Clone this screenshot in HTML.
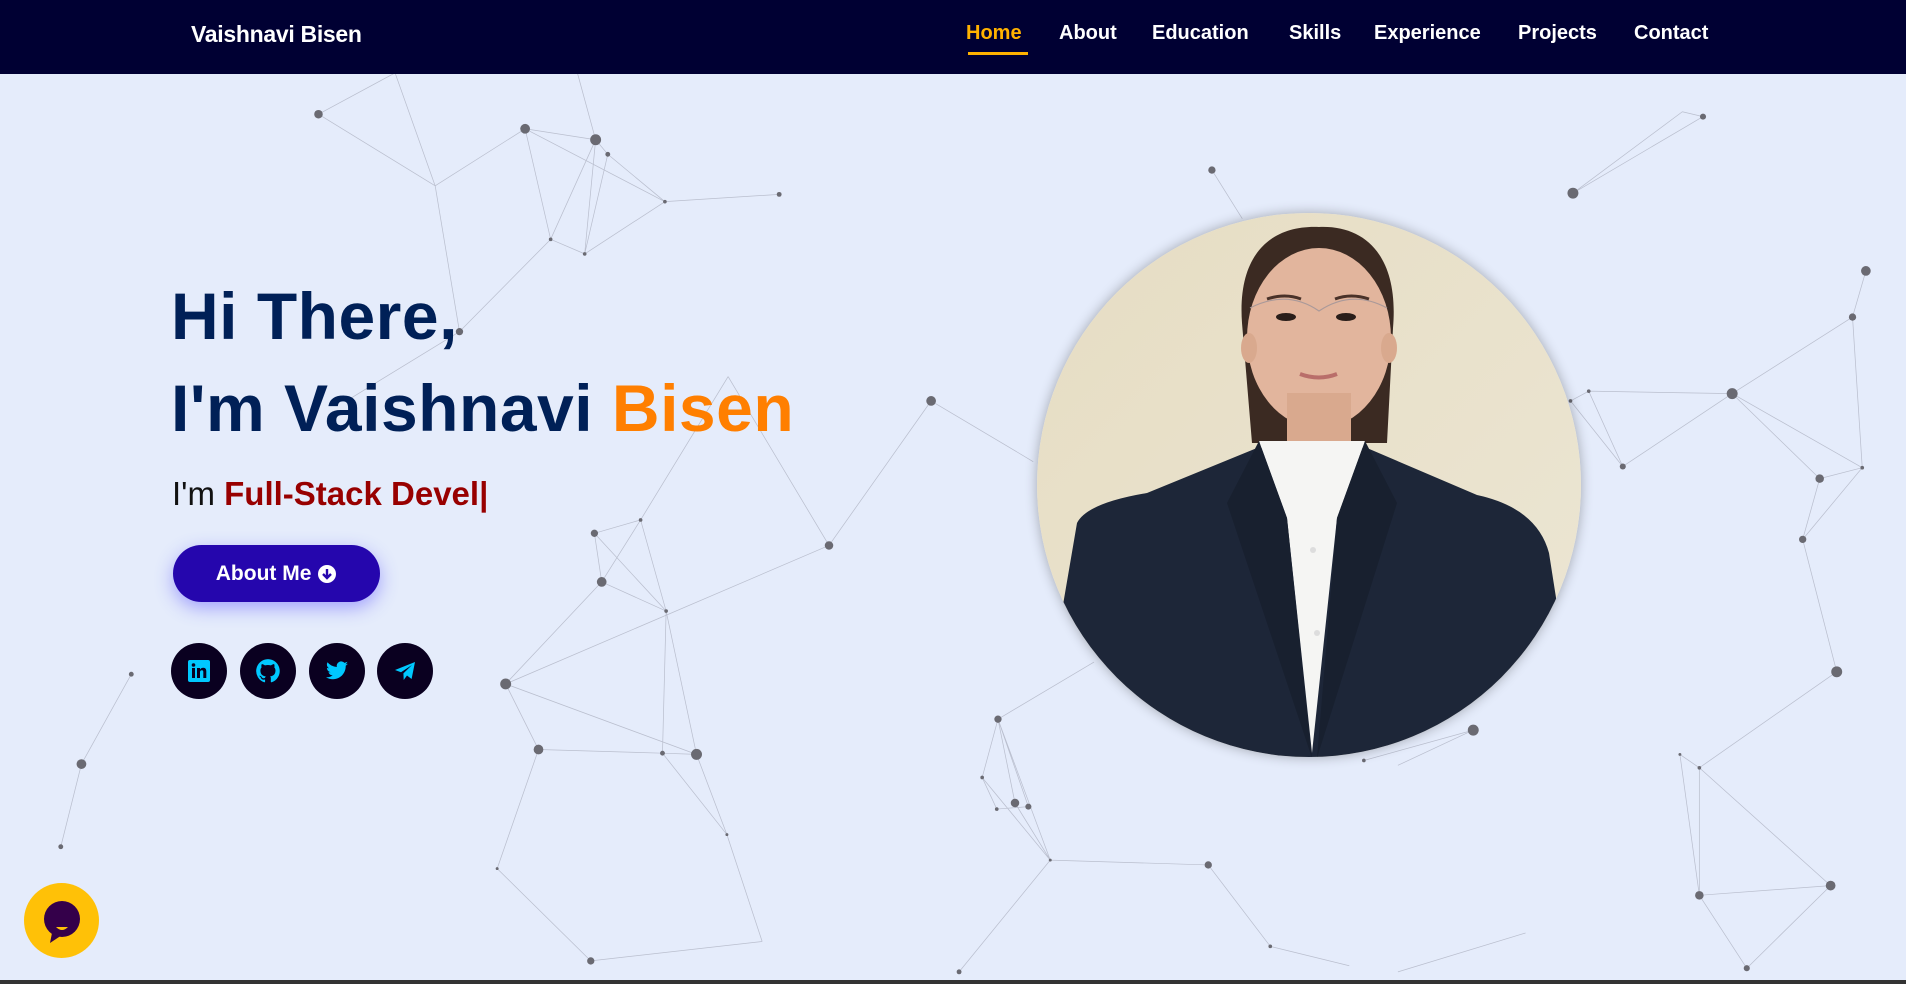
<!DOCTYPE html>
<html><head><meta charset="utf-8"><style>
*{margin:0;padding:0;box-sizing:border-box}
body{width:1906px;height:984px;overflow:hidden;background:#e5ecfb;font-family:"Liberation Sans",sans-serif;position:relative}
nav{position:absolute;left:0;top:0;width:1906px;height:74px;background:#000033;z-index:3}
.logo{position:absolute;left:191px;top:21px;color:#fff;font-weight:700;font-size:23px;letter-spacing:-0.3px}
.nav a{position:absolute;top:22px;color:#fff;font-weight:700;font-size:20px;text-decoration:none}
.nav a.on{color:#ffb200}
.ul{position:absolute;left:968px;top:52px;width:60px;height:3px;background:#ffb200}
svg.bg{position:absolute;left:0;top:0;z-index:0}
.h{position:absolute;left:171px;color:#002057;font-weight:700;font-size:66px;z-index:2;white-space:nowrap;letter-spacing:0.5px}
.sub{position:absolute;left:172px;top:475px;font-size:33px;color:#111;z-index:2}
.sub span{color:#980000;font-weight:700}
.btn{position:absolute;left:173px;top:545px;width:207px;height:57px;border-radius:29px;background:#2506ad;box-shadow:0 6px 18px rgba(80,70,255,.45);color:#fff;font-weight:700;font-size:21px;display:flex;align-items:center;justify-content:center;z-index:2}
.so{position:absolute;top:643px;width:56px;height:56px;border-radius:50%;background:#0a0020;z-index:2;display:flex;align-items:center;justify-content:center}
.photo{position:absolute;left:1037px;top:213px;width:544px;height:544px;border-radius:50%;overflow:hidden;box-shadow:0 0 12px rgba(0,0,0,.3);z-index:2}
.chat{position:absolute;left:24px;top:883px;width:75px;height:75px;border-radius:50%;background:#ffc107;z-index:3}
.bot{position:absolute;left:0;top:980px;width:1906px;height:4px;background:#333}
</style></head><body>
<nav><div class="logo">Vaishnavi Bisen</div>
<div class="nav">
<a class="on" style="left:966px">Home</a><a style="left:1059px">About</a><a style="left:1152px">Education</a><a style="left:1289px">Skills</a><a style="left:1374px">Experience</a><a style="left:1518px">Projects</a><a style="left:1634px">Contact</a></div>
<div class="ul"></div></nav>

<svg class="bg" width="1906" height="984" viewBox="0 0 1568 810" preserveAspectRatio="none">
<g stroke="#556" stroke-width="0.6" stroke-opacity="0.3" fill="none">
<path d="M262 94L325 60M262 94L358 153M325 60L358 153M432 106L358 153M432 106L490 115M432 106L453 197M432 106L547 166M490 115L500 127M500 127L547 166M547 166L641 160M490 115L453 197M490 115L481 209M500 127L481 209M453 197L481 209M481 209L547 166M358 153L378 273M453 197L378 273M475 60L490 115M378 273L285 330"/>
<path d="M599 310L682 449M682 449L416 563M766 330L682 449M766 330L850 380M489 439L527 428M489 439L495 479M527 428L495 479M527 428L548 503M489 439L548 503M495 479L548 503M495 479L416 563M416 563L443 617M443 617L545 620M545 620L573 621M545 620L598 687M573 621L598 687M548 503L573 621M416 563L573 621M443 617L409 715M409 715L486 791M486 791L627 775M598 687L627 775M548 503L545 620M599 310L527 428"/>
<path d="M108 555L67 629M67 629L50 697"/>
<path d="M997 140L1022 180M1294 159L1384 92M1294 159L1401 96M1384 92L1401 96M1535 223L1524 261M1524 261L1425 324M1425 324L1307 322M1307 322L1292 330M1292 330L1335 384M1307 322L1335 384M1425 324L1335 384M1425 324L1497 394M1425 324L1532 385M1497 394L1532 385M1497 394L1483 444M1532 385L1483 444M1524 261L1532 385M1483 444L1511 553M1511 553L1398 632M1382 621L1398 632M1382 621L1398 737M1398 632L1398 737M1398 737L1506 729M1398 737L1437 797M1506 729L1437 797M1398 632L1506 729M1212 601L1122 626M1212 601L1150 630"/>
<path d="M821 592L808 640M821 592L835 661M821 592L846 664M808 640L820 666M808 640L864 708M820 666L846 664M835 661L864 708M821 592L864 708M864 708L994 712M994 712L1045 779M1045 779L1110 795M864 708L789 800M821 592L900 545M1255 768L1150 800"/>
</g>
<g fill="#6a6a72">
<circle cx="262" cy="94" r="3.5"/><circle cx="432" cy="106" r="4"/><circle cx="490" cy="115" r="4.5"/><circle cx="500" cy="127" r="2"/><circle cx="547" cy="166" r="1.5"/><circle cx="641" cy="160" r="2"/><circle cx="453" cy="197" r="1.5"/><circle cx="481" cy="209" r="1.5"/><circle cx="378" cy="273" r="3"/><circle cx="766" cy="330" r="4"/><circle cx="682" cy="449" r="3.5"/><circle cx="489" cy="439" r="3"/><circle cx="527" cy="428" r="1.5"/><circle cx="495" cy="479" r="4"/><circle cx="548" cy="503" r="1.5"/><circle cx="416" cy="563" r="4.5"/><circle cx="443" cy="617" r="4"/><circle cx="545" cy="620" r="2"/><circle cx="573" cy="621" r="4.5"/><circle cx="598" cy="687" r="1.2"/><circle cx="409" cy="715" r="1.2"/><circle cx="486" cy="791" r="3"/><circle cx="108" cy="555" r="2"/><circle cx="67" cy="629" r="4"/><circle cx="50" cy="697" r="2"/><circle cx="997" cy="140" r="3"/><circle cx="1294" cy="159" r="4.5"/><circle cx="1401" cy="96" r="2.5"/><circle cx="1535" cy="223" r="4"/><circle cx="1524" cy="261" r="3"/><circle cx="1425" cy="324" r="4.5"/><circle cx="1307" cy="322" r="1.5"/><circle cx="1292" cy="330" r="1.5"/><circle cx="1335" cy="384" r="2.5"/><circle cx="1497" cy="394" r="3.5"/><circle cx="1532" cy="385" r="1.5"/><circle cx="1483" cy="444" r="3"/><circle cx="1511" cy="553" r="4.5"/><circle cx="1212" cy="601" r="4.5"/><circle cx="1122" cy="626" r="1.5"/><circle cx="1382" cy="621" r="1.2"/><circle cx="1398" cy="632" r="1.5"/><circle cx="1398" cy="737" r="3.5"/><circle cx="1506" cy="729" r="4"/><circle cx="1437" cy="797" r="2.5"/><circle cx="994" cy="712" r="3"/><circle cx="1045" cy="779" r="1.5"/><circle cx="864" cy="708" r="1.2"/><circle cx="821" cy="592" r="3"/><circle cx="808" cy="640" r="1.5"/><circle cx="835" cy="661" r="3.5"/><circle cx="820" cy="666" r="1.5"/><circle cx="846" cy="664" r="2.5"/><circle cx="789" cy="800" r="2"/><circle cx="847" cy="59" r="1"/>
</g></svg>

<div class="h" style="top:278px">Hi There,</div>
<div class="h" style="top:370px">I'm Vaishnavi <span style="color:#ff7f00">Bisen</span></div>
<div class="sub">I'm <span>Full-Stack Devel|</span></div>
<div class="btn">About Me&nbsp;<svg width="20" height="20" viewBox="0 0 20 20"><circle cx="10" cy="10" r="9" fill="#fff"/><path d="M10 5v9M6 10l4 4 4-4" stroke="#2506ad" stroke-width="2.4" fill="none"/></svg></div>

<div class="so" style="left:171px"><svg width="22" height="22" viewBox="0 0 22 22"><rect width="22" height="22" rx="2" fill="#00c8ff"/><rect x="4" y="8" width="3" height="10" fill="#0a0020"/><circle cx="5.5" cy="5" r="1.8" fill="#0a0020"/><path d="M9 8h3v1.5c.8-1.3 2-1.8 3.3-1.8 2.2 0 3 1.4 3 3.8V18h-3v-6c0-1.2-.4-1.8-1.4-1.8-1.2 0-1.9.8-1.9 2V18H9z" fill="#0a0020"/></svg></div>
<div class="so" style="left:240px"><svg width="26" height="26" viewBox="0 0 24 24"><path fill="#00c8ff" d="M12 1a11 11 0 0 0-3.5 21.4c.6.1.8-.2.8-.5v-2c-3 .7-3.700-1.3-3.7-1.300-.5-1.300-1.200-1.600-1.200-1.600-1-.7.1-.6.1-.6 1.1.1 1.6 1.1 1.6 1.1 1 1.7 2.6 1.2 3.2.9.1-.7.4-1.2.7-1.5-2.4-.3-5-1.2-5-5.4 0-1.2.4-2.2 1.1-2.9-.1-.3-.5-1.4.1-2.9 0 0 .9-.3 3 1.1a10.4 10.4 0 0 1 5.5 0c2.1-1.4 3-1.1 3-1.1.6 1.5.2 2.6.1 2.9.7.8 1.1 1.7 1.1 2.9 0 4.2-2.6 5.1-5 5.4.4.3.7 1 .7 2v3c0 .3.2.6.8.5A11 11 0 0 0 12 1z"/></svg></div>
<div class="so" style="left:309px"><svg width="26" height="24" viewBox="0 0 24 24"><path fill="#00c8ff" d="M23 4.6c-.8.4-1.7.6-2.6.7.9-.6 1.6-1.4 2-2.5-.9.5-1.9.9-2.9 1.1a4.5 4.5 0 0 0-7.7 4.1A12.8 12.8 0 0 1 2.5 3.3a4.5 4.5 0 0 0 1.4 6c-.7 0-1.4-.2-2-.6 0 2.2 1.5 4 3.6 4.4-.7.2-1.4.2-2 .1.6 1.8 2.2 3.1 4.2 3.1A9 9 0 0 1 1 18.2 12.8 12.8 0 0 0 7.9 20.2c8.3 0 12.8-6.9 12.8-12.8v-.6c.9-.6 1.6-1.4 2.3-2.2z"/></svg></div>
<div class="so" style="left:377px"><svg width="24" height="24" viewBox="0 0 24 24"><path fill="#00c8ff" d="M22 3L2 11l6 2.2L19 6l-8.6 8.4.3 6.6 3.3-4.5 4.6 3.5z"/></svg></div>

<div class="photo"><svg width="544" height="544" viewBox="0 0 544 544">
<defs><linearGradient id="w" x1="0" y1="0" x2="1" y2="1"><stop offset="0" stop-color="#e6ddc3"/><stop offset="1" stop-color="#ece6d4"/></linearGradient></defs>
<rect width="544" height="544" fill="url(#w)"/>
<path d="M205 110 C200 40 235 12 282 14 C330 12 362 45 356 115 L350 230 L300 230 L300 160 L262 160 L262 230 L215 230 Z" fill="#3b2a22"/>
<ellipse cx="282" cy="125" rx="72" ry="90" fill="#e2b59d"/>
<rect x="250" y="180" width="64" height="60" fill="#d9a98e"/>
<ellipse cx="212" cy="135" rx="8" ry="15" fill="#d9a98e"/><ellipse cx="352" cy="135" rx="8" ry="15" fill="#d9a98e"/>
<path d="M213 95 Q250 76 282 98 Q315 76 350 95" stroke="#a99" stroke-width="1.2" fill="none"/>
<ellipse cx="249" cy="104" rx="10" ry="4" fill="#2a1e1a"/><ellipse cx="309" cy="104" rx="10" ry="4" fill="#2a1e1a"/>
<path d="M230 86 Q248 80 264 86M298 86 Q314 80 332 86" stroke="#4a3229" stroke-width="3" fill="none"/>
<path d="M263 161 Q282 168 300 161" stroke="#b96e6a" stroke-width="4" fill="none"/>
<path d="M40 310 Q50 290 110 280 L220 235 L330 235 L440 282 Q500 295 512 340 L544 544 L0 544 Z" fill="#1d2638"/>
<path d="M222 228 L250 305 L275 540 L300 305 L328 228 Z" fill="#f5f5f3"/>
<path d="M222 228 L190 290 L275 545 L250 305 Z M328 228 L360 290 L280 545 L300 305 Z" fill="#18202f"/>
<circle cx="276" cy="337" r="3" fill="#ddd"/><circle cx="280" cy="420" r="3" fill="#ddd"/>
</svg></div>

<div class="chat"><svg width="75" height="75" viewBox="0 0 75 75"><circle cx="38" cy="36" r="18" fill="#34004a"/><path d="M28 50 L26 60 L38 52 Z" fill="#34004a"/><path d="M32 44 Q38 50 44 44 Z" fill="#ffc107"/></svg></div>
<div class="bot"></div>
</body></html>
